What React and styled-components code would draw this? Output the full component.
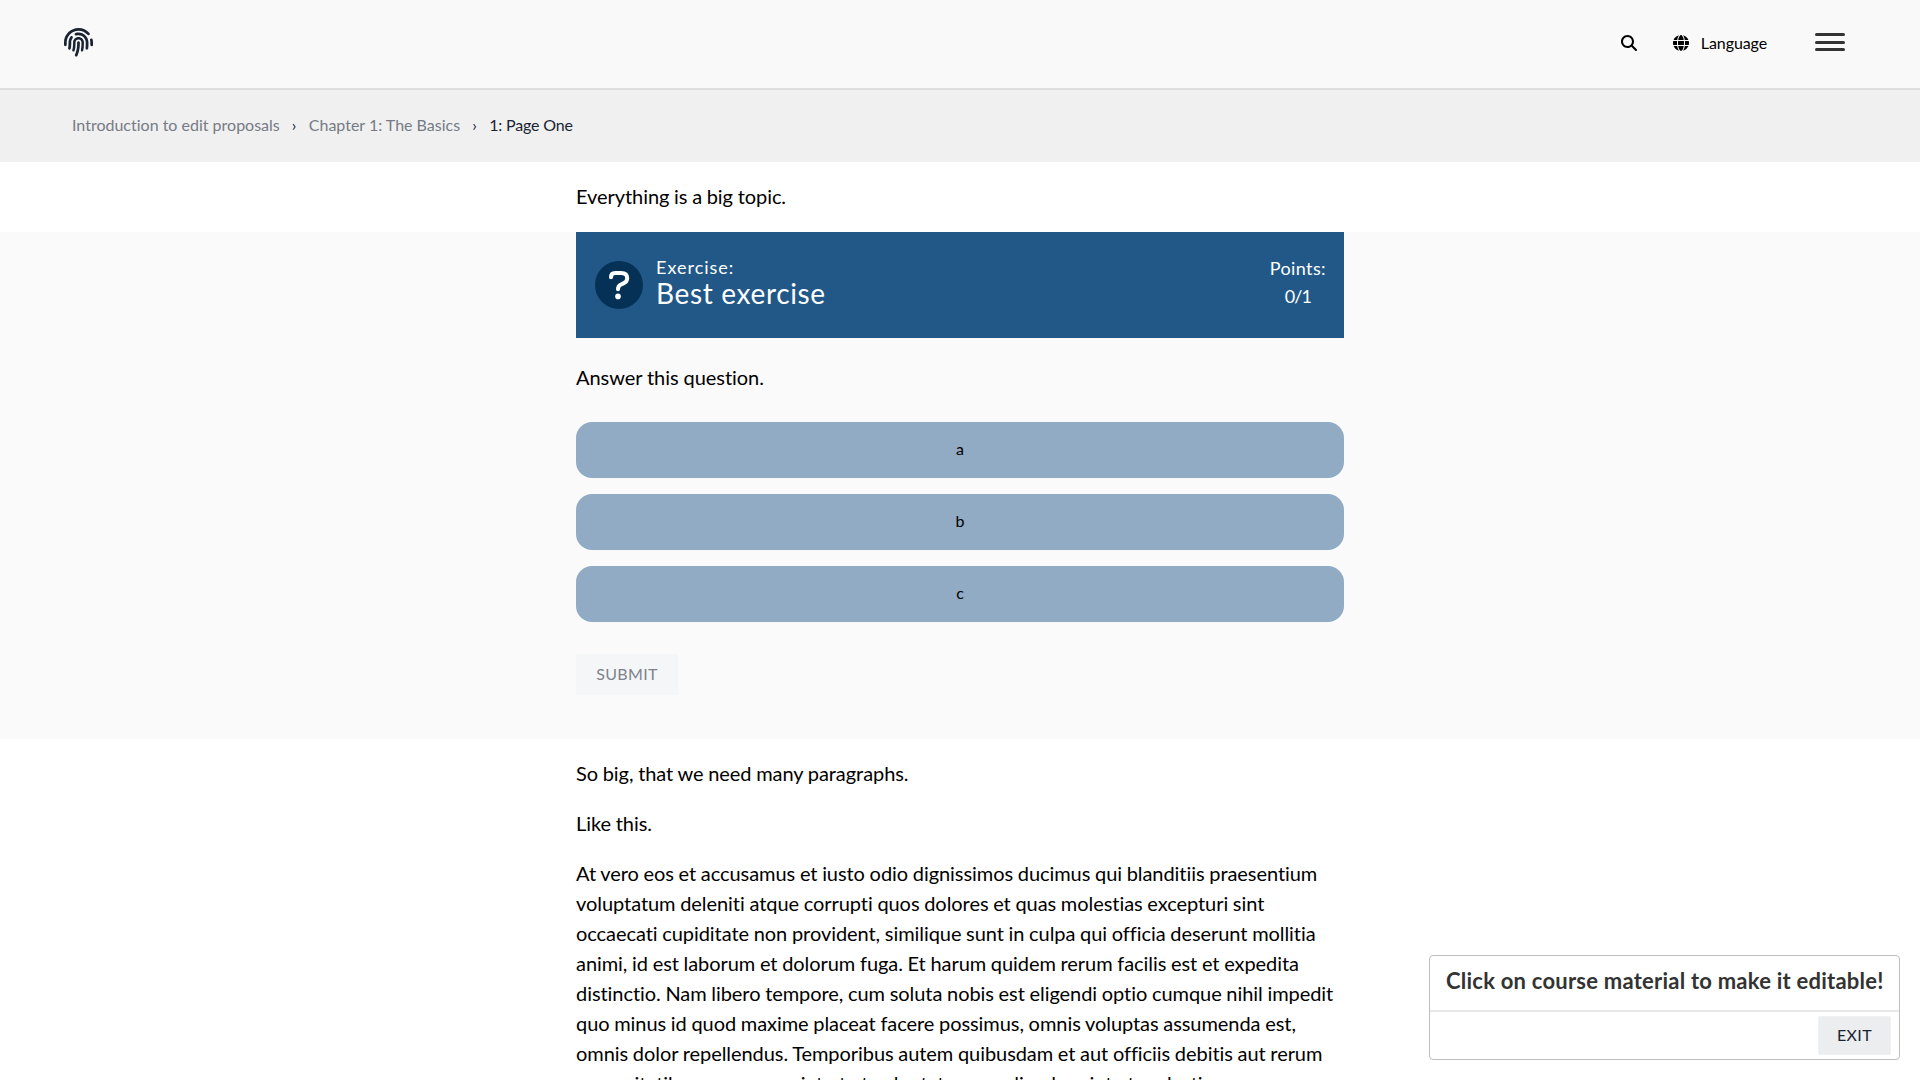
import React from "react";
import styled, { createGlobalStyle } from "styled-components";
import { FaFingerprint, FaMagnifyingGlass, FaGlobe } from "react-icons/fa6";

const GlobalStyle = createGlobalStyle`
  * { box-sizing: border-box; }
  body {
    margin: 0;
    background: #fff;
    color: #000;
    font-family: Lato, "Open Sans", sans-serif;
    font-size: 20px;
    line-height: 30px;
    font-variant-ligatures: none;
  }
  p { margin: 0; }
  button { font-family: inherit; }
`;

const Page = styled.div`
  height: 100vh;
  overflow: hidden;
  display: flex;
  flex-direction: column;
`;

const Header = styled.header`
  flex: none;
  display: flex;
  align-items: center;
  justify-content: space-between;
  height: 90px;
  padding: 0 75px 2px 64px;
  background: #f9f9f9;
  border-bottom: 2px solid #dedede;
`;

const Logo = styled(FaFingerprint)`
  width: 29px;
  height: 29px;
  margin-bottom: 2px;
  color: #1a2333;
`;

const Tools = styled.nav`
  display: flex;
  align-items: center;
`;

const LanguageMenu = styled.div`
  display: flex;
  align-items: center;
  gap: 12px;
  margin: 0 48px 0 36px;
  font-size: 16px;
  line-height: 24px;
  letter-spacing: -0.1px;
`;

const Burger = styled.div`
  display: flex;
  flex-direction: column;
  gap: 4.5px;
  width: 30px;
  margin-bottom: 2px;
`;

const BurgerBar = styled.span`
  height: 3px;
  border-radius: 2px;
  background: #333;
`;

const Breadcrumbs = styled.nav`
  flex: none;
  display: flex;
  align-items: center;
  gap: 12px;
  height: 72px;
  padding: 0 72px 2px;
  background: #f0f0f0;
  font-size: 16px;
  line-height: 24px;
`;

const Crumb = styled.span`
  color: ${(p) => (p.$current ? "#1a2333" : "#767b85")};
  letter-spacing: ${(p) => (p.$current ? "-0.15px" : "0")};
`;

const Separator = styled.span`
  color: #1a2333;
  width: 5px;
`;

const Column = styled.div`
  width: 768px;
  margin: 0 auto;
`;

const Paragraph = styled.p`
  padding: ${(p) => (p.$first ? "19px" : "0")} 0 ${(p) => (p.$only ? "21px" : "20px")};
  letter-spacing: -0.06px;
  word-spacing: -0.35px;
`;

const ExerciseSection = styled.section`
  flex: none;
  height: 507px;
  background: #fafafa;
`;

const ExerciseHeader = styled.div`
  display: flex;
  align-items: center;
  height: 106px;
  padding: 0 18px 0 19px;
  background: #215887;
  color: #fff;
`;

const Badge = styled.svg`
  width: 48px;
  height: 48px;
  margin-right: 13px;
`;

const Heading = styled.h2`
  flex: 1;
  margin: 0 0 9px;
  font-weight: 400;
  font-size: 28px;
  line-height: 28px;
  letter-spacing: 0.65px;
`;

const HeadingLabel = styled.div`
  padding-top: 1px;
  font-size: 18px;
  line-height: 23px;
  letter-spacing: 1px;
`;

const Points = styled.div`
  text-align: center;
  font-size: 18px;
  line-height: 28px;
  letter-spacing: 0.4px;
  margin-bottom: 6px;
`;

const Score = styled.div`
  letter-spacing: -0.9px;
`;

const Assignment = styled.p`
  padding: 24px 0 30px;
  letter-spacing: -0.06px;
`;

const Options = styled.div`
  display: flex;
  flex-direction: column;
  gap: 16px;
`;

const Option = styled.button`
  height: 56px;
  padding: 0 0 4px;
  border: 0;
  border-radius: 16px;
  background: #91abc4;
  color: #000;
  font-size: 16px;
`;

const ActionButton = styled.button`
  display: flex;
  align-items: center;
  justify-content: center;
  width: ${(p) => p.$width}px;
  height: ${(p) => p.$height}px;
  padding: 0 0 ${(p) => (p.$muted ? 2 : 1)}px;
  border: 1px solid ${(p) => (p.$muted ? "#f5f6f7" : "#f0f1f2")};
  border-radius: 2px;
  background: ${(p) => (p.$muted ? "#f5f6f7" : "#ebedee")};
  color: ${(p) => (p.$muted ? "#7d828c" : "#1a2333")};
  font-size: 16px;
  line-height: 20px;
  letter-spacing: ${(p) => (p.$muted ? "0.3px" : "0.4px")};
`;

const SubmitRow = styled.div`
  padding-top: 32px;
`;

const Dialog = styled.aside`
  position: fixed;
  right: 20px;
  bottom: 20px;
  width: 471px;
  height: 105px;
  border: 1px solid #bebebe;
  border-radius: 4px;
  background: #fff;
  display: flex;
  flex-direction: column;
`;

const DialogTitle = styled.h3`
  margin: 0;
  height: 56px;
  padding: 10px 16px 0;
  border-bottom: 2px solid #e8e8e8;
  color: #333;
  font-size: 22px;
  line-height: 30px;
  font-weight: 700;
  letter-spacing: 0.23px;
  white-space: nowrap;
`;

const DialogFooter = styled.div`
  display: flex;
  flex: 1;
  align-items: center;
  justify-content: flex-end;
  padding: 0 8px 0 0;
`;

const options = ["a", "b", "c"];

export default function App() {
  return (
    <Page>
      <GlobalStyle />
      <Header>
        <Logo />
        <Tools>
          <FaMagnifyingGlass size={16} />
          <LanguageMenu>
            <FaGlobe size={16} />
            <span>Language</span>
          </LanguageMenu>
          <Burger>
            <BurgerBar />
            <BurgerBar />
            <BurgerBar />
          </Burger>
        </Tools>
      </Header>
      <Breadcrumbs>
        <Crumb>Introduction to edit proposals</Crumb>
        <Separator>›</Separator>
        <Crumb>Chapter 1: The Basics</Crumb>
        <Separator>›</Separator>
        <Crumb $current>1: Page One</Crumb>
      </Breadcrumbs>
      <Column>
        <Paragraph $first $only>
          Everything is a big topic.
        </Paragraph>
      </Column>
      <ExerciseSection>
        <Column>
          <ExerciseHeader>
            <Badge viewBox="0 0 48 48">
              <circle cx="24" cy="24" r="24" fill="#063157" />
              <path
                d="M16 16.2 Q16 12 20.2 12 H26 Q32.2 12 32.2 17.3 Q32.2 20.8 28.4 22.4 L25.6 23.7 Q23 25 23 28.2"
                fill="none"
                stroke="#fff"
                strokeWidth="4"
                strokeLinecap="round"
              />
              <circle cx="23" cy="35.4" r="2.8" fill="#fff" />
            </Badge>
            <Heading>
              <HeadingLabel>Exercise:</HeadingLabel>
              Best exercise
            </Heading>
            <Points>
              Points:
              <Score>0/1</Score>
            </Points>
          </ExerciseHeader>
          <Assignment>Answer this question.</Assignment>
          <Options>
            {options.map((o) => (
              <Option key={o}>{o}</Option>
            ))}
          </Options>
          <SubmitRow>
            <ActionButton $muted $width={102} $height={41}>
              SUBMIT
            </ActionButton>
          </SubmitRow>
        </Column>
      </ExerciseSection>
      <Column>
        <Paragraph $first>So big, that we need many paragraphs.</Paragraph>
        <Paragraph>Like this.</Paragraph>
        <Paragraph>
          At vero eos et accusamus et iusto odio dignissimos ducimus qui blanditiis praesentium
          voluptatum deleniti atque corrupti quos dolores et quas molestias excepturi sint
          occaecati cupiditate non provident, similique sunt in culpa qui officia deserunt mollitia
          animi, id est laborum et dolorum fuga. Et harum quidem rerum facilis est et expedita
          distinctio. Nam libero tempore, cum soluta nobis est eligendi optio cumque nihil impedit
          quo minus id quod maxime placeat facere possimus, omnis voluptas assumenda est,
          <br />
          omnis dolor repellendus. Temporibus autem quibusdam et aut officiis debitis aut rerum
          necessitatibus saepe eveniet ut et voluptates repudiandae sint et molestiae
        </Paragraph>
      </Column>
      <Dialog>
        <DialogTitle>Click on course material to make it editable!</DialogTitle>
        <DialogFooter>
          <ActionButton $width={73} $height={39}>
            EXIT
          </ActionButton>
        </DialogFooter>
      </Dialog>
    </Page>
  );
}
